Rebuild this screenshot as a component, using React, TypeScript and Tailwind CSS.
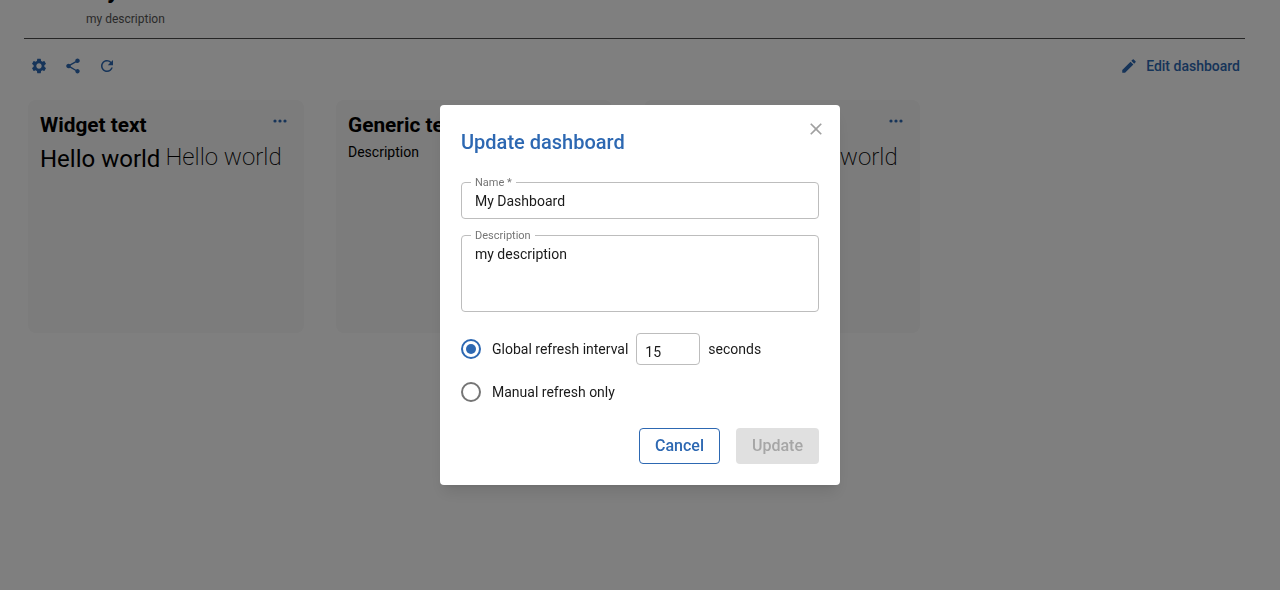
import { MdSettings, MdShare, MdRefresh, MdEdit, MdClose } from "react-icons/md";

function Dots() {
  return (
    <svg width="14" height="4" viewBox="0 0 14 4" fill="#2d68b2">
      <circle cx="2" cy="2" r="1.6" />
      <circle cx="7" cy="2" r="1.6" />
      <circle cx="12" cy="2" r="1.6" />
    </svg>
  );
}

function WidgetCard() {
  return (
    <div className="w-[276px] h-[233px] rounded-lg bg-[#f8f8f8] px-3 pt-[11px] relative">
      <div className="flex items-start justify-between">
        <div className="text-[20.8px] leading-[28px] font-bold text-black">Widget text</div>
        <div className="pt-[8px] pr-[5px] flex"><Dots /></div>
      </div>
      <div className="flex gap-[6px] mt-[3px] whitespace-nowrap text-[24px] leading-[32px] text-black">
        <span className="mt-[1px]">Hello world</span>
        <span className="font-extralight -mt-[1px] -ml-[1px]">Hello world</span>
      </div>
    </div>
  );
}

function GenericCard() {
  return (
    <div className="w-[276px] h-[233px] rounded-lg bg-[#f8f8f8] px-3 pt-[11px]">
      <div className="text-[20.8px] leading-[28px] font-bold text-black">Generic text</div>
      <div className="text-[14px] leading-[20px] mt-[3px] text-black">Description</div>
    </div>
  );
}

export default function App() {
  return (
    <div className="relative h-[590px] w-[1280px] overflow-hidden bg-white font-['Roboto',sans-serif]">
      <div className="ml-6 mr-[35px] -mt-[13px] h-[52px] border-b border-[#4a4a4a] pl-[62px]">
        <div className="text-[24px] leading-[24px] font-bold text-black -translate-y-[9px]">My Dashboard</div>
        <div className="text-[12px] leading-[16px] text-[#555]">my description</div>
      </div>

      <div className="flex items-center justify-between pl-[30px] pr-10 mt-[18px] h-[18px] text-[#2d68b2]">
        <div className="flex items-center gap-4">
          <MdSettings size={18} />
          <MdShare size={18} />
          <MdRefresh size={18} />
        </div>
        <div className="flex items-center gap-2 text-[14px] leading-[20px] font-medium">
          <MdEdit size={18} />
          <span>Edit dashboard</span>
        </div>
      </div>

      <div className="flex gap-8 pl-7 mt-[25px]">
        <WidgetCard />
        <GenericCard />
        <WidgetCard />
      </div>

      <div className="fixed inset-0 bg-black/50 flex items-start justify-center pt-[105px]">
        <div className="w-[400px] h-[380px] rounded-[4px] bg-white shadow-lg px-[21px] pt-[22px] relative">
          <button className="absolute right-[14px] top-[14px] text-[#a0a0a0]">
            <MdClose size={20} />
          </button>
          <div className="text-[20px] leading-[30px] font-medium text-[#2d68b2]">Update dashboard</div>

          <fieldset className="mt-[20px] h-[42px] rounded-[4px] border border-[#bdbdbd] px-[9px]">
            <legend className="text-[11px] leading-[11px] text-[#757575] px-[4px]">Name *</legend>
            <div className="text-[14px] leading-[20px] text-[#1a1a1a] pl-[4px] pt-[3px]">My Dashboard</div>
          </fieldset>

          <fieldset className="mt-[11px] h-[82px] rounded-[4px] border border-[#bdbdbd] px-[9px]">
            <legend className="text-[11px] leading-[11px] text-[#757575] px-[4px]">Description</legend>
            <div className="text-[14px] leading-[20px] text-[#1a1a1a] pl-[4px] pt-[3px]">my description</div>
          </fieldset>

          <div className="flex items-center mt-[21px] h-[32px] text-[14px] text-[#1a1a1a]">
            <span className="w-[20px] h-[20px] rounded-full border-2 border-[#2d68b2] flex items-center justify-center">
              <span className="w-[10px] h-[10px] rounded-full bg-[#2d68b2]" />
            </span>
            <span className="ml-[11px]">Global refresh interval</span>
            <div className="ml-2 w-[64px] h-[32px] rounded-[4px] border border-[#bdbdbd] pl-2 pt-[8px] leading-[20px]">15</div>
            <span className="ml-2">seconds</span>
          </div>

          <div className="flex items-center mt-[17px] h-[20px] text-[14px] text-[#1a1a1a]">
            <span className="w-[20px] h-[20px] rounded-full border-2 border-[#757575]" />
            <span className="ml-[11px]">Manual refresh only</span>
          </div>

          <div className="flex justify-end gap-4 mt-[26px]">
            <button className="w-[81px] h-[36px] rounded-[4px] border border-[#2d68b2] text-[16px] font-medium text-[#2d68b2]">Cancel</button>
            <button className="w-[83px] h-[36px] rounded-[4px] bg-[#e0e0e0] text-[16px] font-medium text-[#a6a6a6]">Update</button>
          </div>
        </div>
      </div>
    </div>
  );
}
